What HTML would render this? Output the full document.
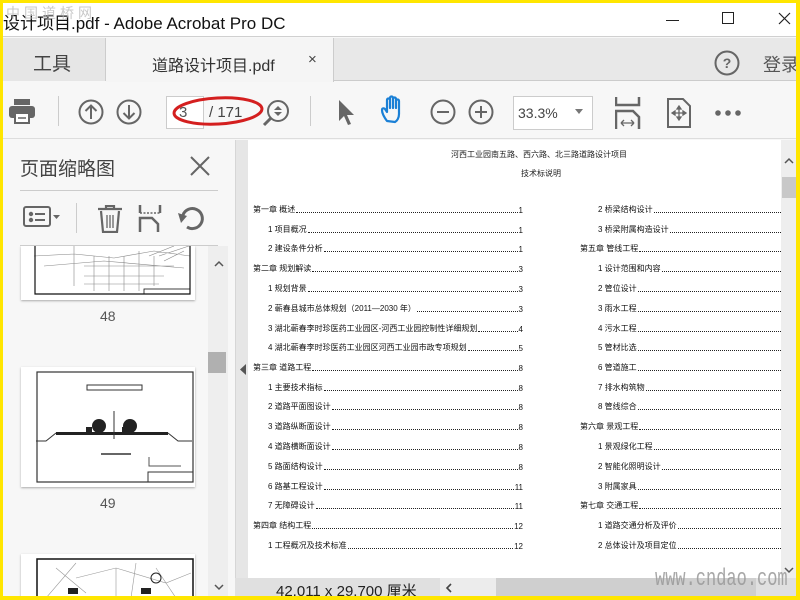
<!DOCTYPE html>
<html><head><meta charset="utf-8"><style>
*{margin:0;padding:0;box-sizing:border-box}
body{width:800px;height:600px;overflow:hidden;background:#ffe600;font-family:"Liberation Sans","Noto Sans CJK SC",sans-serif;position:relative}
.a{position:absolute;white-space:nowrap}
.t{font-size:8px;color:#222;white-space:nowrap;font-family:"Liberation Sans","Noto Sans CJK SC",sans-serif}
.row{position:absolute;height:10px;font-size:8px;color:#111;display:flex;align-items:flex-end;white-space:nowrap}
.row .d{flex:1;border-bottom:1px dotted #222;margin:0 1px 2px}
svg{position:absolute}
</style></head><body>
<div class="a" style="left:3px;top:3px;width:793px;height:593px;background:#f7f7f7;overflow:hidden">
<!-- title bar -->
<div class="a" style="left:0;top:0;width:793px;height:34px;background:#fff;border-bottom:1px solid #d0d0d0"></div>
<div class="a" style="left:0;top:6px;font-size:17px;color:#111">设计项目.pdf - Adobe Acrobat Pro DC</div>
<div class="a" style="left:3px;top:0;font-size:14px;color:#bbb;letter-spacing:4px;opacity:.8">中国道桥网</div>
<div class="a" style="left:663px;top:17px;width:13px;height:1px;background:#222"></div>
<div class="a" style="left:719px;top:9px;width:12px;height:12px;border:1px solid #222"></div>
<svg style="left:775px;top:9px" width="13" height="13"><path d="M1 1L12 12M12 1L1 12" stroke="#222" stroke-width="1.2"/></svg>
<!-- tab bar -->
<div class="a" style="left:0;top:35px;width:793px;height:43px;background:#e8e8e8;border-bottom:1px solid #ccc"></div>
<div class="a" style="left:0;top:35px;width:103px;height:43px;background:#e6e6e6;border-right:1px solid #ccc"></div>
<div class="a" style="left:30px;top:46px;font-size:19px;color:#444">工具</div>
<div class="a" style="left:103px;top:35px;width:228px;height:44px;background:#f5f5f5;border-right:1px solid #ccc"></div>
<div class="a" style="left:149px;top:49px;font-size:16px;color:#333">道路设计项目.pdf</div>
<div class="a" style="left:305px;top:48px;font-size:15px;color:#444">×</div>
<svg style="left:711px;top:44px" width="30" height="30"><circle cx="13" cy="16" r="11.5" fill="none" stroke="#666" stroke-width="2"/><text x="13" y="21" font-size="14" font-weight="bold" text-anchor="middle" fill="#666" font-family="Liberation Sans">?</text></svg>
<div class="a" style="left:760px;top:48px;font-size:18px;color:#555;width:60px">登录</div>
<!-- toolbar -->
<div class="a" style="left:0;top:79px;width:793px;height:57px;background:#f7f7f7;border-bottom:1px solid #ddd"></div>
<svg style="left:5px;top:95px" width="30" height="28"><rect x="6" y="1" width="16" height="6" fill="#666"/><rect x="1" y="8" width="26" height="12" rx="3" fill="#666"/><rect x="7" y="15" width="14" height="10" fill="#fff" stroke="#666" stroke-width="2"/><line x1="10" y1="20" x2="18" y2="20" stroke="#666" stroke-width="1.5"/></svg>
<div class="a" style="left:55px;top:93px;width:1px;height:30px;background:#ccc"></div>
<svg style="left:75px;top:95px" width="64" height="28"><circle cx="13" cy="14" r="11.5" fill="none" stroke="#666" stroke-width="2"/><path d="M13 21V8M7.5 13L13 7.5L18.5 13" fill="none" stroke="#666" stroke-width="2"/><circle cx="51" cy="14" r="11.5" fill="none" stroke="#666" stroke-width="2"/><path d="M51 7V20M45.5 15L51 20.5L56.5 15" fill="none" stroke="#666" stroke-width="2"/></svg>
<div class="a" style="left:163px;top:93px;width:38px;height:33px;background:#fff;border:1px solid #ccc"></div>
<div class="a" style="left:176px;top:101px;font-size:15px;color:#555">3</div>
<div class="a" style="left:206px;top:101px;font-size:15px;color:#444">/ 171</div>
<svg style="left:168px;top:90px" width="95" height="36"><ellipse cx="47" cy="18" rx="44" ry="13" fill="none" stroke="#d41f1f" stroke-width="3" transform="rotate(-3 47 18)"/></svg>
<svg style="left:258px;top:95px" width="30" height="30"><circle cx="17" cy="13" r="10" fill="none" stroke="#666" stroke-width="2"/><path d="M13 12L17 8L21 12ZM13 14L17 18L21 14Z" fill="#666"/><line x1="10" y1="20" x2="3" y2="27" stroke="#666" stroke-width="3"/></svg>
<div class="a" style="left:307px;top:93px;width:1px;height:30px;background:#ccc"></div>
<svg style="left:334px;top:96px" width="20" height="28"><path d="M2 1L2 22L7 17L11 26L14 25L10 16L17 16Z" fill="#666"/></svg>
<svg style="left:376px;top:92px" width="32" height="32"><path d="M8 26C5 22 3 18 3 15C3 13 5 13 6 14L8 17V5C8 3 11 3 11 5V13V3C11 1 14 1 14 3V13V4C14 2 17 2 17 4V13V6C17 4 20 4 20 6V19C20 23 18 26 16 27Z" fill="none" stroke="#1b80d6" stroke-width="2.2" stroke-linejoin="round"/></svg>
<svg style="left:426px;top:95px" width="70" height="28"><circle cx="14" cy="14" r="11.5" fill="none" stroke="#666" stroke-width="2"/><line x1="8" y1="14" x2="20" y2="14" stroke="#666" stroke-width="2"/><circle cx="52" cy="14" r="11.5" fill="none" stroke="#666" stroke-width="2"/><path d="M46 14H58M52 8V20" stroke="#666" stroke-width="2"/></svg>
<div class="a" style="left:510px;top:93px;width:80px;height:34px;background:#fff;border:1px solid #ccc"></div>
<div class="a" style="left:515px;top:102px;font-size:14px;color:#444">33.3%</div>
<svg style="left:572px;top:106px" width="10" height="6"><path d="M0 0H8L4 5Z" fill="#777"/></svg>
<svg style="left:612px;top:94px" width="26" height="32"><path d="M1 0V8H24V0" fill="none" stroke="#666" stroke-width="2.5"/><path d="M1 32V14H18L24 20V32" fill="none" stroke="#666" stroke-width="2.5"/><path d="M6 26H19M6 26L9 23M6 26L9 29M19 26L16 23M19 26L16 29" stroke="#666" stroke-width="1.3" fill="none"/></svg>
<svg style="left:664px;top:95px" width="24" height="30"><path d="M1 1H16L23 8V29H1Z" fill="none" stroke="#666" stroke-width="2"/><path d="M12 8V22M5 15H19M12 8L10 11H14ZM12 22L10 19H14ZM5 15L8 13V17ZM19 15L16 13V17Z" stroke="#666" stroke-width="1.3" fill="#666"/></svg>
<svg style="left:712px;top:106px" width="26" height="8"><circle cx="3" cy="4" r="2.8" fill="#666"/><circle cx="13" cy="4" r="2.8" fill="#666"/><circle cx="23" cy="4" r="2.8" fill="#666"/></svg>
<!-- left panel -->
<div class="a" style="left:0;top:137px;width:232px;height:456px;background:#f7f7f7"></div>
<div class="a" style="left:17px;top:151px;font-size:19px;color:#444">页面缩略图</div>
<svg style="left:187px;top:153px" width="20" height="20"><path d="M1 1L19 19M19 1L1 19" stroke="#666" stroke-width="2"/></svg>
<div class="a" style="left:17px;top:187px;width:198px;height:1px;background:#ccc"></div>
<div class="a" style="left:17px;top:242px;width:198px;height:1px;background:#ccc"></div>
<svg style="left:20px;top:203px" width="40" height="22"><rect x="1" y="1" width="26" height="19" rx="2" fill="none" stroke="#666" stroke-width="2"/><circle cx="8" cy="8" r="2.2" fill="#666"/><circle cx="8" cy="14" r="2.2" fill="#666"/><path d="M12 8H22M12 14H22" stroke="#666" stroke-width="2"/><path d="M30 9H37L33.5 13Z" fill="#666"/></svg>
<div class="a" style="left:73px;top:200px;width:1px;height:30px;background:#ccc"></div>
<svg style="left:94px;top:202px" width="26" height="28"><path d="M1 4H25M9 4V1H17V4M4 6L6 27H20L22 6" fill="none" stroke="#666" stroke-width="2.2"/><path d="M10 10V23M13 10V23M16 10V23" stroke="#666" stroke-width="1.3"/></svg>
<svg style="left:135px;top:202px" width="24" height="28"><path d="M2 0V8M22 0V8M2 27V13H14L20 19V27" fill="none" stroke="#666" stroke-width="2.5"/><path d="M2 8H22" stroke="#666" stroke-width="1.5" stroke-dasharray="2 1.5"/></svg>
<svg style="left:175px;top:202px" width="30" height="28"><path d="M9 22A10 10 0 1 0 5 10" fill="none" stroke="#666" stroke-width="3"/><path d="M0 8L9 11L3 18Z" fill="#666"/></svg>
<!-- thumbnails -->
<div class="a" style="left:0;top:243px;width:205px;height:350px;overflow:hidden">
 <div class="a" style="left:18px;top:0;width:174px;height:54px;background:#fff;box-shadow:0 1px 2px #aaa"></div>
 <svg style="left:31px;top:0" width="157" height="51"><g stroke="#888" stroke-width=".6" fill="none"><path d="M0 10L40 8L80 12L120 5L156 10M10 20L70 15L150 22M40 0V40M60 10V45M75 10V45M90 10V45M105 5V45M120 10V40M50 20H140M50 30H130M50 38H125M115 10L140 0M125 10L155 0M130 15L150 5"/></g><path d="M1 0V48H156V0" fill="none" stroke="#111" stroke-width="1.2"/><rect x="110" y="43" width="46" height="5" fill="none" stroke="#111" stroke-width=".8"/></svg>
 <div class="a" style="left:97px;top:62px;font-size:14px;color:#555">48</div>
 <div class="a" style="left:18px;top:121px;width:174px;height:120px;background:#fff;box-shadow:0 1px 2px #aaa"></div>
 <svg style="left:33px;top:125px" width="158" height="112"><rect x="1" y="1" width="156" height="110" fill="none" stroke="#333" stroke-width="1.2"/><rect x="51" y="14" width="55" height="5" fill="none" stroke="#333"/><g fill="#222"><circle cx="63" cy="55" r="7"/><circle cx="94" cy="55" r="7"/><rect x="20" y="61" width="112" height="3"/><rect x="50" y="56" width="6" height="5"/><rect x="86" y="56" width="6" height="5"/></g><path d="M0 70H10L20 62M132 62L142 70H156M78 40V68" stroke="#333" fill="none"/><path d="M65 83H95" stroke="#333" stroke-width="1.5"/><path d="M113 86V95L145 95" stroke="#555" fill="none"/><rect x="112" y="101" width="45" height="10" fill="none" stroke="#333"/></svg>
 <div class="a" style="left:97px;top:249px;font-size:14px;color:#555">49</div>
 <div class="a" style="left:18px;top:308px;width:174px;height:60px;background:#fff;box-shadow:0 1px 2px #aaa"></div>
 <svg style="left:33px;top:312px" width="158" height="40"><rect x="1" y="1" width="156" height="45" fill="none" stroke="#111" stroke-width="1.5"/><g stroke="#999" stroke-width=".6" fill="none"><path d="M10 40L40 5M40 20L80 10L130 25L155 15M80 10V40M100 5L95 40M20 10L50 35M120 10L140 40"/></g><rect x="32" y="30" width="10" height="6" fill="#222"/><rect x="105" y="30" width="10" height="6" fill="#222"/><circle cx="120" cy="20" r="5" fill="none" stroke="#222"/></svg>
</div>
<div class="a" style="left:205px;top:243px;width:20px;height:350px;background:#eeeeee"></div>
<svg style="left:211px;top:257px" width="10" height="7"><path d="M1 6L5 2L9 6" fill="none" stroke="#555" stroke-width="1.5"/></svg>
<div class="a" style="left:205px;top:349px;width:18px;height:21px;background:#b0b0b0"></div>
<svg style="left:211px;top:581px" width="10" height="7"><path d="M1 1L5 5L9 1" fill="none" stroke="#555" stroke-width="1.5"/></svg>
<div class="a" style="left:232px;top:137px;width:13px;height:456px;background:#e6e6e6;border-left:1px solid #d6d6d6"></div>
<svg style="left:237px;top:361px" width="7" height="12"><path d="M6 0V11L0 5.5Z" fill="#555"/></svg>
<!-- document -->
<div class="a" style="left:245px;top:137px;width:533px;height:438px;background:#fff"></div>
<div class="a t" style="left:448px;top:146px;font-size:8px">河西工业园南五路、西六路、北三路道路设计项目</div>
<div class="a t" style="left:518px;top:165px;font-size:8px">技术标说明</div>
<div id="toc"></div>
<!-- right scrollbar -->
<div class="a" style="left:778px;top:137px;width:15px;height:438px;background:#eeeeee"></div>
<svg style="left:781px;top:154px" width="10" height="7"><path d="M1 6L5 2L9 6" fill="none" stroke="#555" stroke-width="1.5"/></svg>
<div class="a" style="left:779px;top:174px;width:14px;height:21px;background:#c8c8c8"></div>
<svg style="left:781px;top:564px" width="10" height="7"><path d="M1 1L5 5L9 1" fill="none" stroke="#555" stroke-width="1.5"/></svg>
<!-- bottom bar -->
<div class="a" style="left:232px;top:575px;width:561px;height:18px;background:#e0e0e0"></div>
<div class="a" style="left:273px;top:577px;font-size:15px;color:#222">42.011 x 29.700 厘米</div>
<div class="a" style="left:437px;top:575px;width:56px;height:18px;background:#ececec"></div>
<div class="a" style="left:493px;top:575px;width:260px;height:18px;background:#cfcfcf"></div>
<svg style="left:442px;top:580px" width="8" height="10"><path d="M6 1L2 5L6 9" fill="none" stroke="#444" stroke-width="1.6"/></svg>
<div class="a" style="left:652px;top:564px;font-size:17px;color:#999;font-family:'Liberation Mono',monospace;transform:scaleY(1.4);transform-origin:left top;opacity:.85">www.cndao.com</div>
</div>
<script>
var L=[[0,209,"第一章 概述","1"],[1,229,"1 项目概况","1"],[1,248,"2 建设条件分析","1"],[0,268,"第二章 规划解读","3"],[1,288,"1 规划背景","3"],[1,308,"2 蕲春县城市总体规划（2011—2030 年）","3"],[1,328,"3 湖北蕲春李时珍医药工业园区-河西工业园控制性详细规划","4"],[2,347,"4 湖北蕲春李时珍医药工业园区河西工业园市政专项规划","5"],[0,367,"第三章 道路工程","8"],[1,387,"1 主要技术指标","8"],[2,406,"2 道路平面图设计","8"],[2,426,"3 道路纵断面设计","8"],[2,446,"4 道路横断面设计","8"],[2,466,"5 路面结构设计","8"],[2,486,"6 路基工程设计","11"],[2,505,"7 无障碍设计","11"],[0,525,"第四章 结构工程","12"],[1,545,"1 工程概况及技术标准","12"]];
var R=[[1,209,"2 桥梁结构设计"],[1,229,"3 桥梁附属构造设计"],[0,248,"第五章 管线工程"],[1,268,"1 设计范围和内容"],[1,288,"2 管位设计"],[1,308,"3 雨水工程"],[1,328,"4 污水工程"],[1,347,"5 管材比选"],[1,367,"6 管道施工"],[1,387,"7 排水构筑物"],[1,406,"8 管线综合"],[0,426,"第六章 景观工程"],[1,446,"1 景观绿化工程"],[1,466,"2 智能化照明设计"],[1,486,"3 附属家具"],[0,505,"第七章 交通工程"],[1,525,"1 道路交通分析及评价"],[1,545,"2 总体设计及项目定位"]];
var h="";
L.forEach(function(e){var x=e[0]==0?250:265;h+='<div class="row" style="left:'+x+'px;top:'+(e[1]-7)+'px;width:'+(520-x)+'px"><span>'+e[2]+'</span><span class="d"></span><span>'+e[3]+'</span></div>';});
R.forEach(function(e){var x=e[0]==0?577:595;h+='<div class="row" style="left:'+x+'px;top:'+(e[1]-7)+'px;width:'+(778-x)+'px"><span>'+e[2]+'</span><span class="d" style="margin-right:0"></span></div>';});
document.getElementById("toc").outerHTML=h;
</script>
</body></html>
